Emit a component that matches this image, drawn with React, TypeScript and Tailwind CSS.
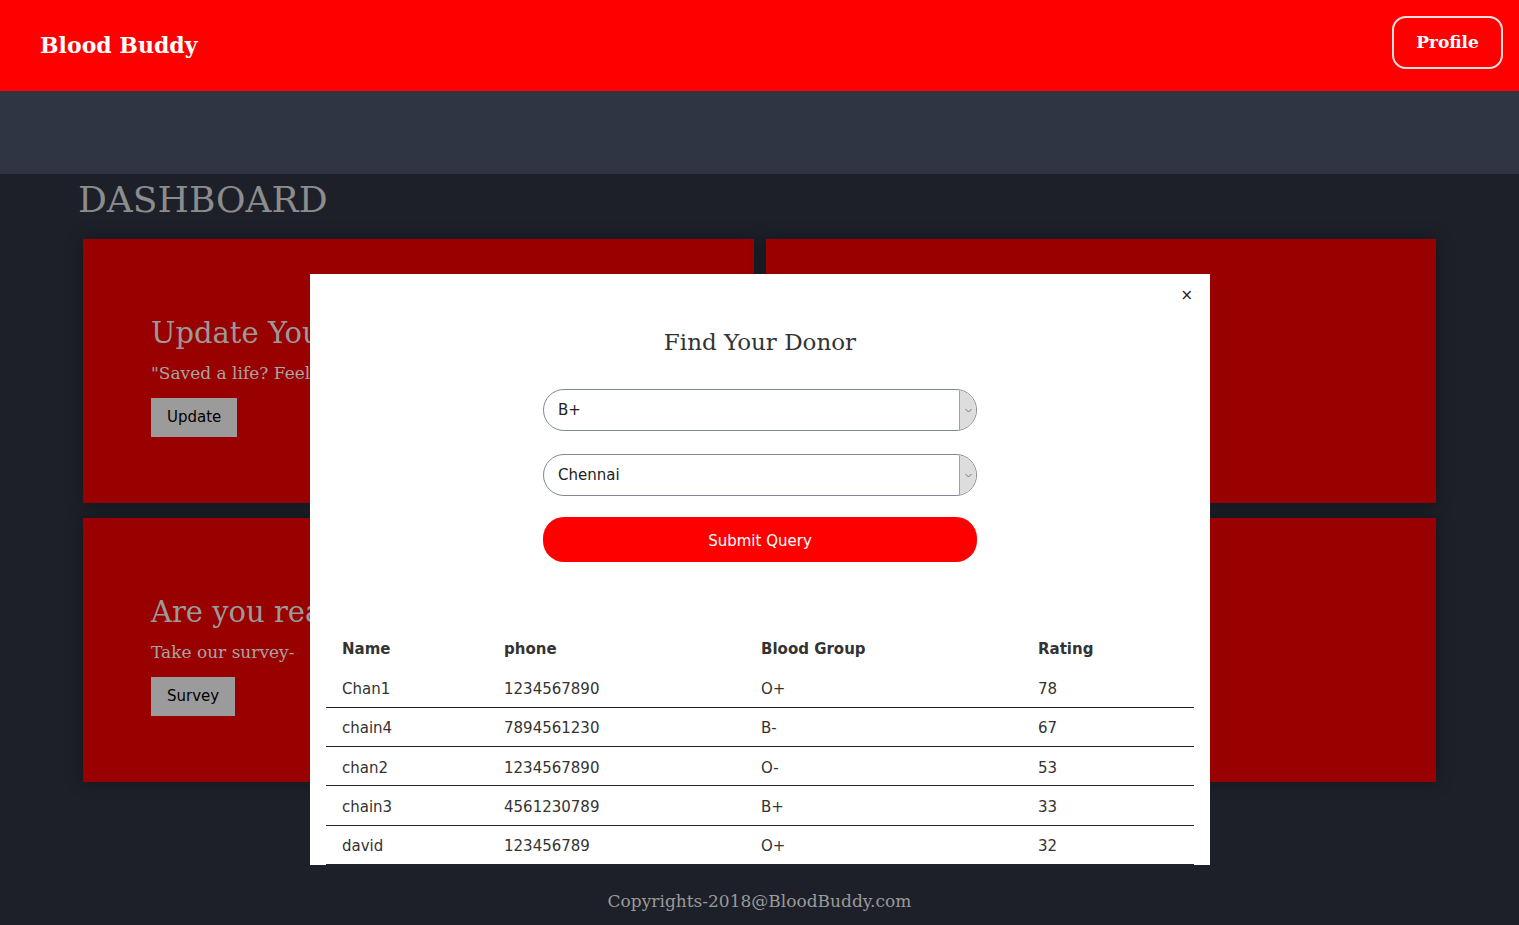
import React from 'react';

const serif = "font-['DejaVu_Serif',serif]";
const sans = "font-['DejaVu_Sans',sans-serif]";

type Donor = { name: string; phone: string; group: string; rating: number };

const donors: Donor[] = [
  { name: 'Chan1', phone: '1234567890', group: 'O+', rating: 78 },
  { name: 'chain4', phone: '7894561230', group: 'B-', rating: 67 },
  { name: 'chan2', phone: '1234567890', group: 'O-', rating: 53 },
  { name: 'chain3', phone: '4561230789', group: 'B+', rating: 33 },
  { name: 'david', phone: '123456789', group: 'O+', rating: 32 },
];

function Card({ title, text, button }: { title?: string; text?: string; button?: string }) {
  return (
    <div className="h-[264px] bg-[#990000] shadow-[0_0_16px_rgba(0,0,0,0.35)] pl-[68px] flex flex-col justify-center pt-[8px]">
      {title && (
        <>
          <h2 className={`${serif} text-[29px] leading-[38px] text-[#9a9a9a] whitespace-nowrap`}>{title}</h2>
          <p className={`${serif} text-[17px] leading-[26px] text-[#a5a5a5] mt-[8px] whitespace-nowrap`}>{text}</p>
          <div className="mt-[12px]">
            <button className={`${sans} text-[15px] text-black bg-[#9b9b9b] h-[39px] px-[16px]`}>{button}</button>
          </div>
        </>
      )}
    </div>
  );
}

function Select({ value }: { value: string }) {
  return (
    <div className="h-[42px] w-[434px] rounded-full border border-[#7d8b99] overflow-hidden flex bg-white">
      <div className={`${sans} flex-1 flex items-center pl-[14px] text-[15px] text-[#222]`}>{value}</div>
      <div className="w-[17px] bg-[#dddddd] border-l border-[#9aa3ad] flex items-center justify-center">
        <svg width="7" height="5" viewBox="0 0 7 5" fill="none">
          <path d="M0.5 1 L3.5 4 L6.5 1" stroke="#777" strokeWidth="1" />
        </svg>
      </div>
    </div>
  );
}

function DonorModal() {
  return (
    <div className="fixed left-[310px] top-[274px] w-[900px] bg-white">
      <button className={`${sans} absolute right-[17px] top-[14px] text-[15px] leading-none text-[#222]`}>×</button>
      <div className="pt-[54px] flex flex-col items-center">
        <h3 className={`${serif} text-[23px] leading-[28px] text-[#333]`}>Find Your Donor</h3>
        <div className="mt-[33px]">
          <Select value="B+" />
        </div>
        <div className="mt-[23px]">
          <Select value="Chennai" />
        </div>
        <button className={`${sans} mt-[21px] w-[434px] h-[45px] pt-[3px] rounded-[21px] bg-[#ff0000] text-white text-[15px]`}>
          Submit Query
        </button>
      </div>
      <div className={`${sans} mx-[16px] mt-[66px] text-[15px] text-[#333]`}>
        <div className="grid grid-cols-[162px_257px_277px_1fr] h-[40px] pt-[2px] items-center font-bold">
          <div className="pl-[16px]">Name</div>
          <div className="pl-[16px]">phone</div>
          <div className="pl-[16px]">Blood Group</div>
          <div className="pl-[16px]">Rating</div>
        </div>
        {donors.map((d, i) => (
          <div
            key={d.name}
            className={`grid grid-cols-[162px_257px_277px_1fr] items-center pt-[3px] border-b border-[#222] ${i === 0 ? 'h-[40px]' : 'h-[39.2px]'}`}
          >
            <div className="pl-[16px]">{d.name}</div>
            <div className="pl-[16px]">{d.phone}</div>
            <div className="pl-[16px]">{d.group}</div>
            <div className="pl-[16px]">{d.rating}</div>
          </div>
        ))}
      </div>
    </div>
  );
}

export default function App() {
  return (
    <div className="min-h-screen bg-[#1d2029]">
      {/* Header */}
      <header className="h-[91px] bg-[#ff0000] flex justify-between pl-[40px] pr-[16px]">
        <h1 className={`${serif} self-center text-[22px] font-bold text-white`}>Blood Buddy</h1>
        <button className={`${serif} mt-[16px] h-[53px] w-[111px] rounded-[14px] border-2 border-[#ffdede] text-white text-[17px] font-bold`}>
          Profile
        </button>
      </header>
      <div className="h-[83px] bg-[#303544]" />

      {/* Dashboard */}
      <main className="px-[83px]">
        <h2 className={`${serif} text-[36px] leading-[50px] text-[#8c8c8c] ml-[-5px] mt-[1px]`}>DASHBOARD</h2>
        <div className="grid grid-cols-2 gap-x-[12px] gap-y-[15px] mt-[14px]">
          <Card title="Update Your Status" text={'"Saved a life? Feel proud!"'} button="Update" />
          <Card />
          <Card title="Are you ready?" text="Take our survey-" button="Survey" />
          <Card />
        </div>
      </main>

      <footer className={`${serif} text-center text-[17px] text-[#9a9a9a] pt-[107px] pb-[11px]`}>
        Copyrights-2018@BloodBuddy.com
      </footer>

      <DonorModal />
    </div>
  );
}
